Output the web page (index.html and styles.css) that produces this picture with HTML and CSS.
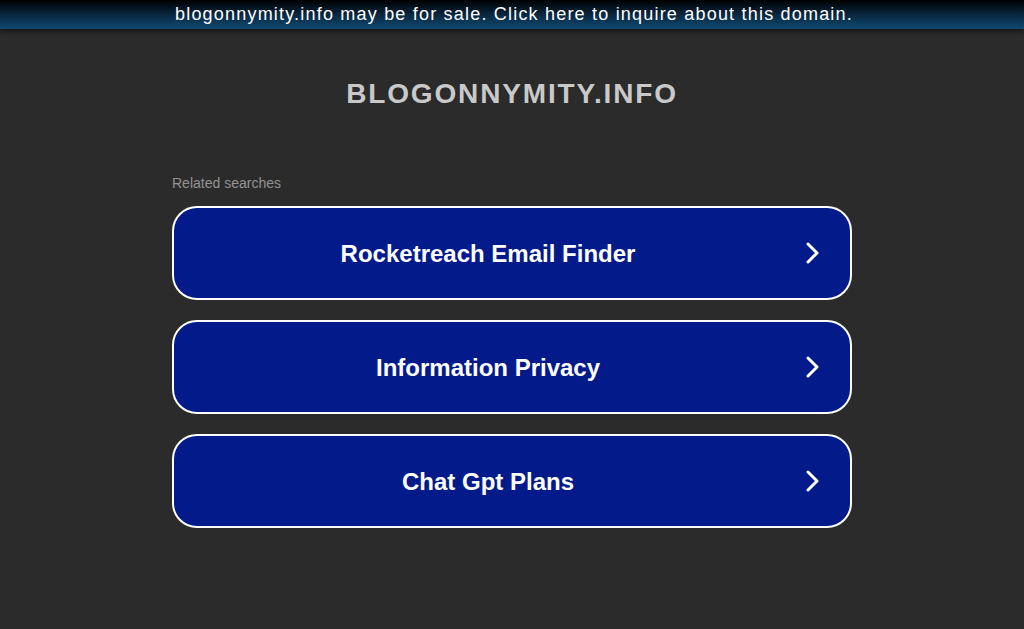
FILE: index.html
```html
<!DOCTYPE html>
<html>
<head>
<meta charset="utf-8">
<link rel="stylesheet" href="styles.css">
</head>
<body>
<div class="topbar"><a href="#">blogonnymity.info may be for sale. Click here to inquire about this domain.</a></div>
<h1 class="domain">BLOGONNYMITY.INFO</h1>
<div class="content">
  <div class="related">Related searches</div>
  <a class="btn" href="#"><span class="label">Rocketreach Email Finder</span><svg class="chev" viewBox="0 0 16 22" width="16" height="22"><path d="M3 2 L12 11 L3 20" fill="none" stroke="#fff" stroke-width="3" stroke-linecap="round" stroke-linejoin="round"/></svg></a>
  <a class="btn" href="#"><span class="label">Information Privacy</span><svg class="chev" viewBox="0 0 16 22" width="16" height="22"><path d="M3 2 L12 11 L3 20" fill="none" stroke="#fff" stroke-width="3" stroke-linecap="round" stroke-linejoin="round"/></svg></a>
  <a class="btn" href="#"><span class="label">Chat Gpt Plans</span><svg class="chev" viewBox="0 0 16 22" width="16" height="22"><path d="M3 2 L12 11 L3 20" fill="none" stroke="#fff" stroke-width="3" stroke-linecap="round" stroke-linejoin="round"/></svg></a>
</div>
</body>
</html>
```
FILE: styles.css
```css
html, body {
  margin: 0;
  padding: 0;
  background: #2b2b2b;
  font-family: "Liberation Sans", Arial, sans-serif;
}
.topbar {
  height: 29px;
  padding-left: 4px;
  background: linear-gradient(to bottom, #000000 0%, #0a2a45 55%, #0d4a70 100%);
  box-shadow: 0 2px 5px rgba(0,0,0,0.6);
  text-align: center;
  line-height: 28px;
}
.topbar a {
  color: #fff;
  text-decoration: none;
  font-size: 18px;
  letter-spacing: 1.2px;
}
.domain {
  margin: 48px 0 0;
  text-align: center;
  color: #c9c9c9;
  font-size: 28px;
  line-height: 34px;
  letter-spacing: 1.85px;
  font-weight: bold;
}
.content {
  width: 680px;
  margin: 64px auto 0;
}
.related {
  color: #939393;
  font-size: 14px;
  line-height: 16px;
  margin-bottom: 15px;
}
.btn {
  display: flex;
  align-items: center;
  box-sizing: border-box;
  height: 94px;
  margin-bottom: 20px;
  background: #021a8a;
  border: 2px solid #fff;
  border-radius: 25px;
  text-decoration: none;
}
.label {
  flex: 1;
  padding-top: 2px;
  text-align: center;
  color: #fff;
  font-size: 24px;
  font-weight: bold;
}
.chev {
  margin: 0 29px 0 3px;
}
```
